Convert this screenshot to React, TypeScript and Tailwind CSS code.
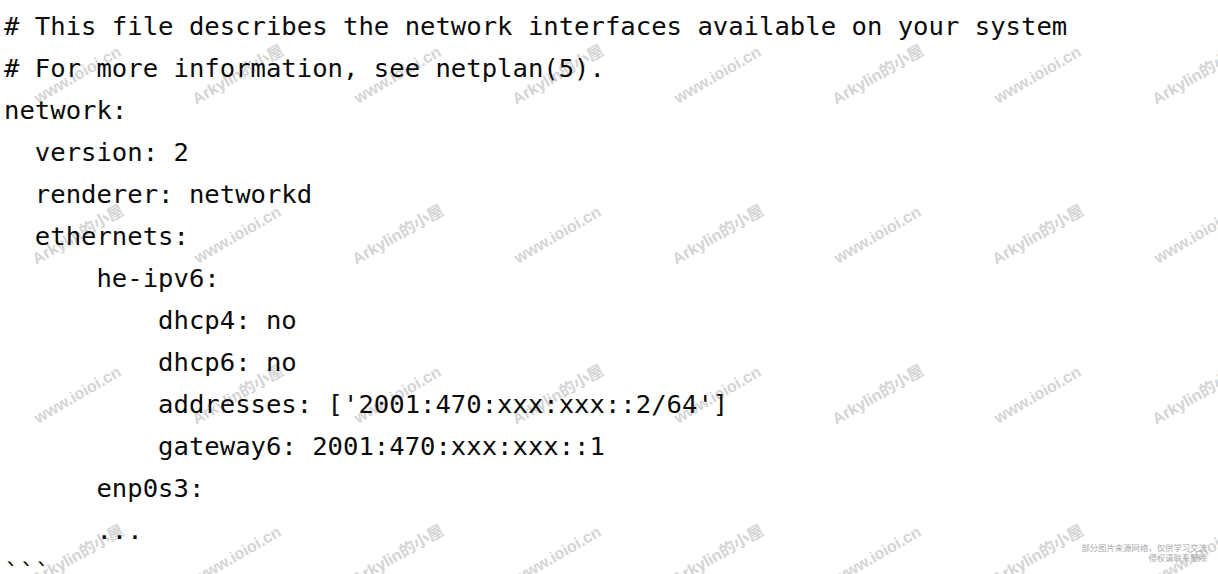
const lines = [
  "# This file describes the network interfaces available on your system",
  "# For more information, see netplan(5).",
  "network:",
  "  version: 2",
  "  renderer: networkd",
  "  ethernets:",
  "      he-ipv6:",
  "          dhcp4: no",
  "          dhcp6: no",
  "          addresses: ['2001:470:xxx:xxx::2/64']",
  "          gateway6: 2001:470:xxx:xxx::1",
  "      enp0s3:",
  "      ...",
  "```",
];

const Watermark = () => {
  const cells = [];
  for (let row = 0; row < 4; row++) {
    for (let col = 0; col < 8; col++) {
      const site = (row + col) % 2 === 0;
      cells.push(
        <div key={`${row}-${col}`} className="flex items-center justify-center">
          <span className="-rotate-30 whitespace-nowrap font-['Liberation_Sans','Noto_Sans_CJK_SC',sans-serif] text-[16px] font-bold text-[#d4d4d4]">
            {site ? "www.ioioi.cn" : "Arkylin的小屋"}
          </span>
        </div>
      );
    }
  }
  return (
    <div className="pointer-events-none absolute left-[-2px] top-[-5px] grid grid-cols-[repeat(8,160px)] auto-rows-[160px]">
      {cells}
    </div>
  );
};

export default function App() {
  return (
    <div className="relative h-[574px] w-full overflow-hidden bg-white">
      <Watermark />
      <pre className="relative pl-1 pt-[5px] font-['DejaVu_Sans_Mono',monospace] text-[25.6px] leading-[42px] text-[#0a0a0a]">
        {lines.map((line, i) => (
          <div key={i} className="whitespace-pre">
            {line}
          </div>
        ))}
      </pre>
      <div className="absolute bottom-[12px] right-[11px] text-right font-['Noto_Sans_CJK_SC',sans-serif] text-[8.4px] leading-[10px] text-[#a8a8a8]">
        <div>部分图片来源网络，仅供学习交流</div>
        <div>侵权请联系删除</div>
      </div>
    </div>
  );
}
